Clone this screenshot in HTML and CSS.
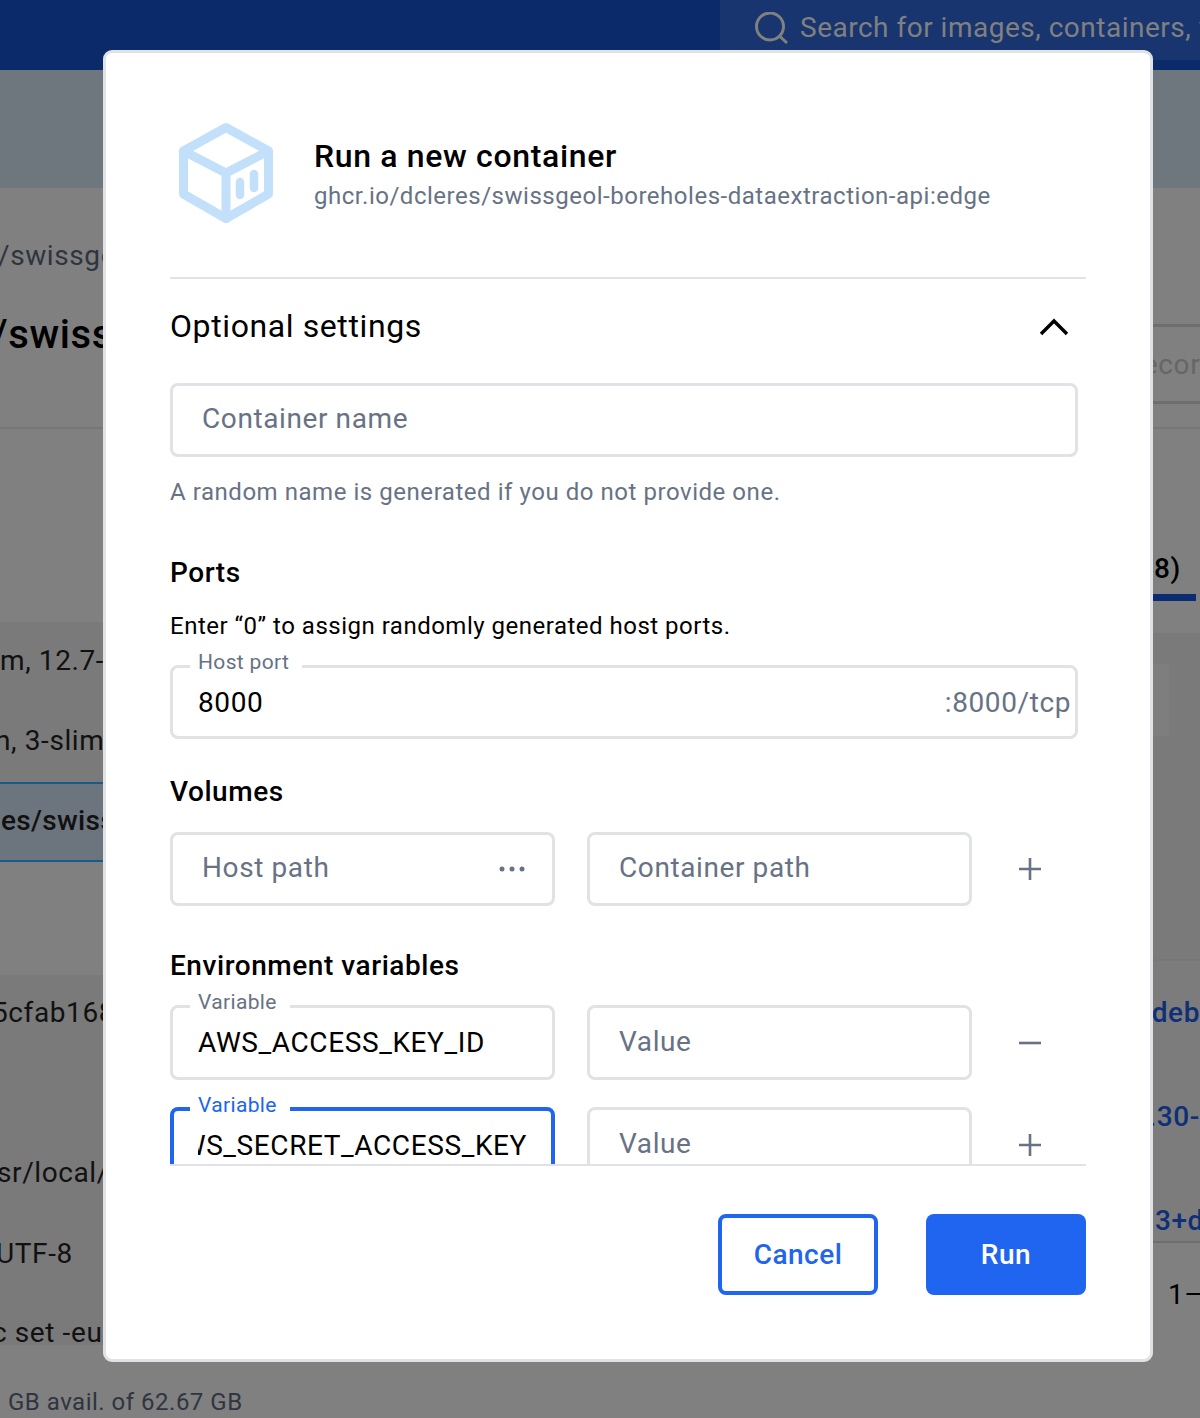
FILE: index.html
```html
<!DOCTYPE html>
<html lang="en">
<head>
    <meta charset="UTF-8">
    <meta name="viewport" content="width=device-width, initial-scale=1.0">
    <title>Run a new container</title>
    <link rel="stylesheet" href="styles.css">
</head>
<body>
    <header class="topbar">
        <div class="search">
            <svg class="search-icon" width="36" height="36" viewBox="0 0 36 36" fill="none">
                <circle cx="16" cy="14.5" r="13.5" stroke="#808080" stroke-width="3"/>
                <path d="M26 24.5l7 6.5" stroke="#808080" stroke-width="3"/>
            </svg>
            <span>Search for images, containers, volumes</span>
        </div>
    </header>
    <div class="hero"></div>

    <!-- page behind the dialog, only the edges show -->
    <main class="backdrop">
        <div class="col-left">
            <div class="crumb">/swissgeol</div>
            <div class="page-title">/swissgeol</div>
            <div class="tbl-row">m, 12.7-slim</div>
            <div class="tbl-row pull">n, 3-slim</div>
            <div class="tbl-row selected">es/swissgeol</div>
            <div class="tbl-gap"></div>
            <div class="tbl-row first">5cfab168</div>
            <div class="tbl-row tall">sr/local/bin</div>
            <div class="tbl-row pull-small">UTF-8</div>
            <div class="tbl-row short">c set -eux</div>
            <div class="status">GB avail. of 62.67 GB</div>
        </div>
        <div class="col-right">
            <div class="tab-box">Records</div>
            <div class="rule"></div>
            <div class="count"><span class="count-label">All (28)</span></div>
            <div class="filter-zone"><div class="filter-box"></div></div>
            <div class="link-row">...deb</div>
            <div class="link-row">...30-</div>
            <div class="link-row cut last">...3+d</div>
            <div class="pager">1–</div>
        </div>
    </main>

    <section class="modal">
        <div class="modal-head">
            <svg class="cube" width="94" height="102" viewBox="0 0 94 102" fill="none" stroke="#c2e0fa" stroke-width="9" stroke-linejoin="round" stroke-linecap="round">
                <path d="M47 5.5L89.5 29V72L47 96.5L4.5 72V29Z"/>
                <path d="M4.5 29L47 51L89.5 29M47 51V96.5"/>
                <path d="M61 60V73M75 52V66" stroke-width="8.5"/>
            </svg>
            <div class="head-text">
                <h2 class="modal-title">Run a new container</h2>
                <div class="modal-sub">ghcr.io/dcleres/swissgeol-boreholes-dataextraction-api:edge</div>
            </div>
        </div>

        <div class="modal-body">
            <div class="optional">
                <span>Optional settings</span>
                <svg width="30" height="18" viewBox="0 0 30 18" fill="none">
                    <path d="M2 16L15 3L28 16" stroke="#000" stroke-width="3.4"/>
                </svg>
            </div>

            <div class="field wide"><span class="placeholder">Container name</span></div>
            <p class="help">A random name is generated if you do not provide one.</p>

            <h3 class="section ports">Ports</h3>
            <p class="hint">Enter “0” to assign randomly generated host ports.</p>
            <div class="field wide filled">
                <label class="float">Host port</label>
                <span class="value">8000</span>
                <span class="suffix">:8000/tcp</span>
            </div>

            <h3 class="section volumes">Volumes</h3>
            <div class="row">
                <div class="field"><span class="placeholder">Host path</span>
                    <svg class="dots" width="26" height="6" viewBox="0 0 26 6" fill="#677285">
                        <circle cx="3" cy="3" r="2.5"/><circle cx="13" cy="3" r="2.5"/><circle cx="23" cy="3" r="2.5"/>
                    </svg>
                </div>
                <div class="field"><span class="placeholder">Container path</span></div>
                <svg class="row-btn" width="24" height="24" viewBox="0 0 24 24" stroke="#677285" stroke-width="2.6"><path d="M1 12H23M12 1V23"/></svg>
            </div>

            <h3 class="section env">Environment variables</h3>
            <div class="row env-row">
                <div class="field filled">
                    <label class="float">Variable</label>
                    <span class="value">AWS_ACCESS_KEY_ID</span>
                </div>
                <div class="field"><span class="placeholder">Value</span></div>
                <svg class="row-btn" width="24" height="24" viewBox="0 0 24 24" stroke="#677285" stroke-width="2.6"><path d="M1 12H23"/></svg>
            </div>
            <div class="row env-row second">
                <div class="field filled focused">
                    <label class="float">Variable</label>
                    <span class="value scrolled"><span>AWS_SECRET_ACCESS_KEY</span></span>
                </div>
                <div class="field"><span class="placeholder">Value</span></div>
                <svg class="row-btn" width="24" height="24" viewBox="0 0 24 24" stroke="#677285" stroke-width="2.6"><path d="M1 12H23M12 1V23"/></svg>
            </div>
        </div>

        <div class="modal-foot">
            <button type="button" class="btn btn-outline">Cancel</button>
            <button type="button" class="btn btn-primary">Run</button>
        </div>
    </section>
</body>
</html>
```

FILE: styles.css
```css
* {
    box-sizing: border-box;
}

html, body {
    height: 100%;
}

body {
    margin: 0;
    height: 1418px;
    overflow: hidden;
    position: relative;
    font-family: Roboto, "Liberation Sans", sans-serif;
    background: #808080;
    color: #000;
}

/* behind the dialog */
.topbar {
    height: 70px;
    background: #0a2a6a;
    padding-left: 720px;
}

.search {
    height: 60px;
    background: #18356f;
    display: flex;
    align-items: center;
    gap: 10px;
    padding: 0 0 6px 34px;
    color: #808080;
    font-size: 28px;
    letter-spacing: 0.5px;
    white-space: nowrap;
    overflow: hidden;
}

.search-icon {
    flex: none;
    margin-top: 6px;
}

.hero {
    height: 118px;
    background: #6e767e;
}

.backdrop {
    display: flex;
    justify-content: space-between;
    height: 1230px;
    font-size: 28px;
    letter-spacing: 0.6px;
    white-space: nowrap;
}

.col-left {
    width: 120px;
}

.crumb {
    margin: 48px 0 0 -2px;
    height: 40px;
    line-height: 40px;
    color: #2f3540;
}

.page-title {
    margin: 34px 0 0 -8px;
    height: 119px;
    padding-bottom: 69px;
    line-height: 50px;
    font-size: 40px;
    font-weight: 500;
    border-bottom: 2px solid #777;
}

.tbl-row {
    height: 80px;
    line-height: 78px;
    background: #7a7a7a;
    color: #111;
}

.page-title + .tbl-row {
    margin-top: 193px;
}

.pull {
    text-indent: -5px;
}

.pull-small {
    text-indent: -4px;
}

.selected {
    background: #6c757d;
    border-top: 2px solid #1a5a8a;
    border-bottom: 2px solid #1a5a8a;
    line-height: 74px;
    font-weight: 500;
    letter-spacing: 0.3px;
    text-indent: 1px;
}

.tbl-gap {
    height: 113px;
}

.tbl-row.first {
    line-height: 76px;
    text-indent: -8px;
}

.tbl-row.tall {
    height: 160px;
    padding-top: 80px;
    line-height: 76px;
    text-indent: -3px;
}

.tbl-row.short {
    height: 50px;
    line-height: 76px;
    text-indent: -8px;
}

.status {
    margin-top: 40px;
    padding-left: 8px;
    font-size: 24px;
    letter-spacing: 0.5px;
    line-height: 34px;
    color: #2f3540;
}

.col-right {
    width: 100px;
}

.tab-box {
    margin-top: 136px;
    height: 80px;
    line-height: 76px;
    padding-left: 25px;
    color: #666;
    overflow: hidden;
    border-top: 3px solid #6e6e6e;
    border-bottom: 3px solid #6e6e6e;
}

.rule {
    height: 25px;
    border-bottom: 2px solid #777;
}

.count {
    height: 172px;
    padding-top: 122px;
}

.count-label {
    display: flex;
    justify-content: flex-end;
    width: 96px;
    height: 50px;
    padding-right: 15px;
    line-height: 36px;
    font-weight: 500;
    border-bottom: 7px solid #0c2c72;
}

.filter-zone {
    margin-top: 32px;
    height: 328px;
    padding-top: 31px;
    background: #7a7a7a;
    border-bottom: 2px solid #777;
}

.filter-box {
    width: 69px;
    height: 72px;
    background: #7e7e7e;
}

.link-row {
    height: 104px;
    line-height: 104px;
    color: #0f2f77;
    font-weight: 500;
    background: #7c7c7c;
    text-align: right;
    overflow: hidden;
}

.link-row.cut {
    margin-right: -4px;
}

.link-row.last {
    height: 74px;
    border-bottom: 2px solid #6e6e6e;
}

.pager {
    margin-top: 32px;
    padding-left: 68px;
    line-height: 40px;
}

/* dialog */
.modal {
    position: absolute;
    top: 50px;
    left: 103px;
    width: 1050px;
    height: 1312px;
    display: flex;
    flex-direction: column;
    padding: 0 64px;
    background: #fff;
    border: 3px solid #e1e2e6;
    border-radius: 9px;
}

.modal-head {
    flex: none;
    height: 226px;
    display: flex;
    align-items: center;
    gap: 41px;
    padding: 16px 0 0 9px;
    border-bottom: 2px solid #e1e2e6;
}

.cube {
    flex: none;
}

.head-text {
    padding-top: 2px;
}

.modal-title {
    margin: 0 0 4px;
    font-size: 32px;
    line-height: 40px;
    font-weight: 500;
    letter-spacing: 0.65px;
}

.modal-sub {
    font-size: 24px;
    line-height: 32px;
    letter-spacing: 0.52px;
    color: #677285;
}

.modal-body {
    flex: 1;
    overflow: hidden;
    border-bottom: 2px solid #e1e2e6;
}

.optional {
    height: 104px;
    padding: 25px 17px 0 0;
    display: flex;
    justify-content: space-between;
    font-size: 32px;
    line-height: 44px;
    letter-spacing: 0.6px;
}

.optional svg {
    margin-top: 14px;
}

.field {
    position: relative;
    width: 385px;
    height: 74px;
    display: flex;
    align-items: center;
    justify-content: space-between;
    padding: 0 29px 3px;
    border: 3px solid #e1e2e6;
    border-radius: 8px;
    font-size: 28px;
    letter-spacing: 0.6px;
    white-space: nowrap;
}

.field.wide {
    width: 908px;
}

.field.filled {
    padding: 0 4px 0 25px;
}

.env-row .field {
    height: 75px;
}

.placeholder {
    color: #677285;
}

.float {
    position: absolute;
    top: -20px;
    left: 17px;
    padding: 0 13px 0 8px;
    background: #fff;
    color: #677285;
    font-size: 21px;
    line-height: 28px;
    letter-spacing: 0.35px;
}

.suffix {
    color: #677285;
}

.field.focused {
    border: 4px solid #2065f0;
    padding-left: 24px;
}

.focused .float {
    top: -20px;
    left: 16px;
    color: #2065f0;
}

.scrolled {
    display: flex;
    justify-content: flex-end;
    width: 329px;
    padding-top: 2px;
    overflow: hidden;
}

.scrolled span {
    flex: none;
}

.dots {
    margin-right: -2px;
    margin-top: 2px;
}

.help, .hint {
    margin: 0;
    font-size: 24px;
    line-height: 32px;
}

.help {
    margin-top: 19px;
    color: #677285;
    letter-spacing: 0.545px;
}

.hint {
    margin-top: 19px;
    margin-bottom: 23px;
    letter-spacing: 0.5px;
}

.section {
    margin: 0;
    font-size: 28px;
    line-height: 36px;
    font-weight: 500;
    letter-spacing: 0.55px;
}

.ports {
    margin-top: 47px;
}

.volumes {
    margin-top: 35px;
    margin-bottom: 22px;
}

.env {
    margin-top: 42px;
    margin-bottom: 21px;
}

.row {
    display: flex;
    align-items: center;
    gap: 32px;
}

.row.second {
    margin-top: 27px;
}

.row-btn {
    flex: none;
    margin-left: 14px;
}

.modal-foot {
    flex: none;
    height: 193px;
    padding-top: 48px;
    display: flex;
    justify-content: flex-end;
    align-items: flex-start;
    gap: 48px;
}

.btn {
    width: 160px;
    height: 81px;
    border-radius: 8px;
    font-family: inherit;
    font-size: 28px;
    font-weight: 500;
    letter-spacing: 0.5px;
    cursor: pointer;
}

.btn-outline {
    background: #fff;
    color: #2065f0;
    border: 4px solid #2065f0;
}

.btn-primary {
    background: #2065f0;
    color: #fff;
    border: none;
}
```
